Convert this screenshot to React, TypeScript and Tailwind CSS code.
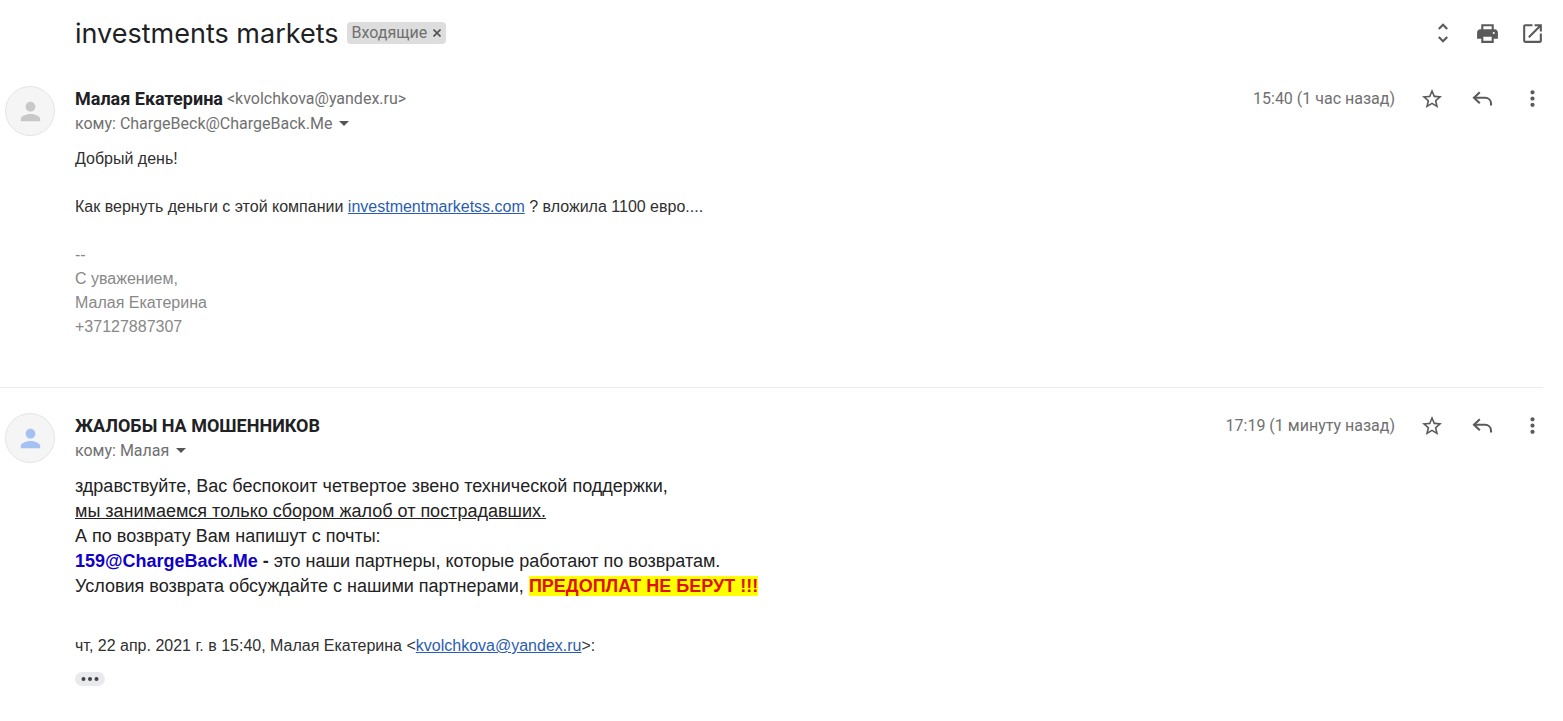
import type { ReactNode } from "react";
import { MdMoreVert, MdOpenInNew, MdPerson, MdStarBorder, MdUnfoldMore } from "react-icons/md";

function PrintIcon() {
	return (
		<svg viewBox="0 0 24 24" className="h-[25px] w-[25px]" fill="currentColor">
			<path
				fillRule="evenodd"
				d="M19 8h-1V3H6v5H5c-1.66 0-3 1.34-3 3v6h4v4h12v-4h4v-6c0-1.66-1.34-3-3-3zM8 5h8v3H8V5zm8 14H8v-4h8v4zm2-6.5a1 1 0 1 1 0-2 1 1 0 0 1 0 2z"
			/>
		</svg>
	);
}

function ReplyIcon() {
	return (
		<svg viewBox="0 0 24 24" className="h-6 w-6" fill="none" stroke="currentColor" strokeWidth="2.1">
			<path d="M9.8 5.3 4 10.8l5.8 5.5" />
			<path d="M4 10.8h11c3.4 0 6 2.4 6 5.7v2" />
		</svg>
	);
}

function IconButton({ label, className, children }: { label: string; className: string; children: ReactNode }) {
	return (
		<button
			type="button"
			aria-label={label}
			className={`flex items-center justify-center text-[#5a5a5a] ${className}`}>
			{children}
		</button>
	);
}

type MessageProps = {
	name: string;
	email?: string;
	to: string;
	time: string;
	avatarColor: string;
	children: ReactNode;
};

function Message({ name, email, to, time, avatarColor, children }: MessageProps) {
	return (
		<article className="flex gap-5 pl-[5px]">
			<div
				className={`flex h-[50px] w-[50px] shrink-0 items-center justify-center rounded-full border border-[#e4e4e4] bg-[#f5f5f5] ${avatarColor}`}>
				<MdPerson size={29} />
			</div>
			<div className="min-w-0 flex-1">
				<header className="flex items-start justify-between font-[Roboto,sans-serif] text-base leading-[25px] text-[#707070]">
					<div>
						<h2 className="flex items-center gap-1">
							<span className="text-lg leading-[25px] font-bold text-[#202124]">{name}</span>
							{email && <span>&lt;{email}&gt;</span>}
						</h2>
						<button type="button" className="flex items-center gap-[7px]">
							кому: {to}
							<svg viewBox="0 0 10 5" className="h-[5px] w-[10px]" fill="#555">
								<path d="M0 0h10L5 5z" />
							</svg>
						</button>
					</div>
					<div className="flex items-center pr-[6px]">
						<time className="mr-3">{time}</time>
						<IconButton label="Пометить" className="h-[25px] w-[50px]">
							<MdStarBorder size={24} />
						</IconButton>
						<IconButton label="Ответить" className="h-[25px] w-[50px]">
							<ReplyIcon />
						</IconButton>
						<IconButton label="Ещё" className="h-[25px] w-[50px]">
							<MdMoreVert size={25} />
						</IconButton>
					</div>
				</header>
				<div className="mt-[11px]">{children}</div>
			</div>
		</article>
	);
}

export default function App() {
	return (
		<main className="bg-white font-['Liberation_Sans',Arial,sans-serif] text-base text-[#303030]">
			<div className="flex h-[66px] items-center justify-between pr-2 pl-[75px]">
				<div className="flex items-center gap-2">
					<h1 className="pt-[2px] font-[Inter,sans-serif] text-[27px] leading-8 text-[#202124]">investments markets</h1>
					<span className="flex h-[22px] items-center gap-[6px] rounded bg-[#ddd] px-[5px] font-[Roboto,sans-serif] text-base text-[#707070]">
						Входящие
						<button type="button" aria-label="Удалить ярлык">
							<svg viewBox="0 0 8 8" className="h-2 w-2" fill="none" stroke="#555" strokeWidth="1.7">
								<path d="M.5.5l7 7M7.5.5l-7 7" />
							</svg>
						</button>
					</span>
				</div>
				<div className="flex">
					<IconButton label="Развернуть все" className="h-8 w-[45px]">
						<MdUnfoldMore size={26} />
					</IconButton>
					<IconButton label="Печать" className="h-8 w-[45px]">
						<PrintIcon />
					</IconButton>
					<IconButton label="В новом окне" className="h-8 w-[45px]">
						<MdOpenInNew size={25} />
					</IconButton>
				</div>
			</div>

			<div className="pt-5 pb-12">
				<Message
					name="Малая Екатерина"
					email="kvolchkova@yandex.ru"
					to="ChargeBeck@ChargeBack.Me"
					time="15:40 (1 час назад)"
					avatarColor="text-[#c8c8c8]">
					<p>Добрый день!</p>
					<p className="mt-6">
						Как вернуть деньги с этой компании{" "}
						<a href="#" className="text-[#2a5db0] underline">
							investmentmarketss.com
						</a>{" "}
						? вложила 1100 евро....
					</p>
					<div className="mt-6 text-[#888]">
						<p>--</p>
						<p>С уважением,</p>
						<p>Малая Екатерина</p>
						<p>+37127887307</p>
					</div>
				</Message>
			</div>

			<hr className="mr-5 border-[#ebebeb]" />

			<div className="pt-[25px] pb-8">
				<Message
					name="ЖАЛОБЫ НА МОШЕННИКОВ"
					to="Малая"
					time="17:19 (1 минуту назад)"
					avatarColor="text-[#a5c0f2]">
					<div className="text-lg leading-[25px] text-[#222]">
						<p>здравствуйте, Вас беспокоит четвертое звено технической поддержки,</p>
						<p className="underline">мы занимаемся только сбором жалоб от пострадавших.</p>
						<p>А по возврату Вам напишут с почты:</p>
						<p>
							<b>
								<span className="text-[#1000c8]">159@ChargeBack.Me</span> -
							</b>{" "}
							это наши партнеры, которые работают по возвратам.
						</p>
						<p>
							Условия возврата обсуждайте с нашими партнерами,{" "}
							<b className="bg-[#ff0] text-[#e01000]">ПРЕДОПЛАТ НЕ БЕРУТ !!!</b>
						</p>
					</div>
					<p className="mt-[35px]">
						чт, 22 апр. 2021 г. в 15:40, Малая Екатерина &lt;
						<a href="#" className="text-[#2a5db0] underline">
							kvolchkova@yandex.ru
						</a>
						&gt;:
					</p>
					<button
						type="button"
						aria-label="Показать скрытый текст"
						className="mt-[14px] flex h-[14px] w-[30px] items-center justify-center rounded-full bg-[#e8eaed]">
						<svg viewBox="0 0 18 4" className="h-1 w-[18px]" fill="#444">
							<circle cx="2.5" cy="2" r="2" />
							<circle cx="9" cy="2" r="2" />
							<circle cx="15.5" cy="2" r="2" />
						</svg>
					</button>
				</Message>
			</div>
		</main>
	);
}
